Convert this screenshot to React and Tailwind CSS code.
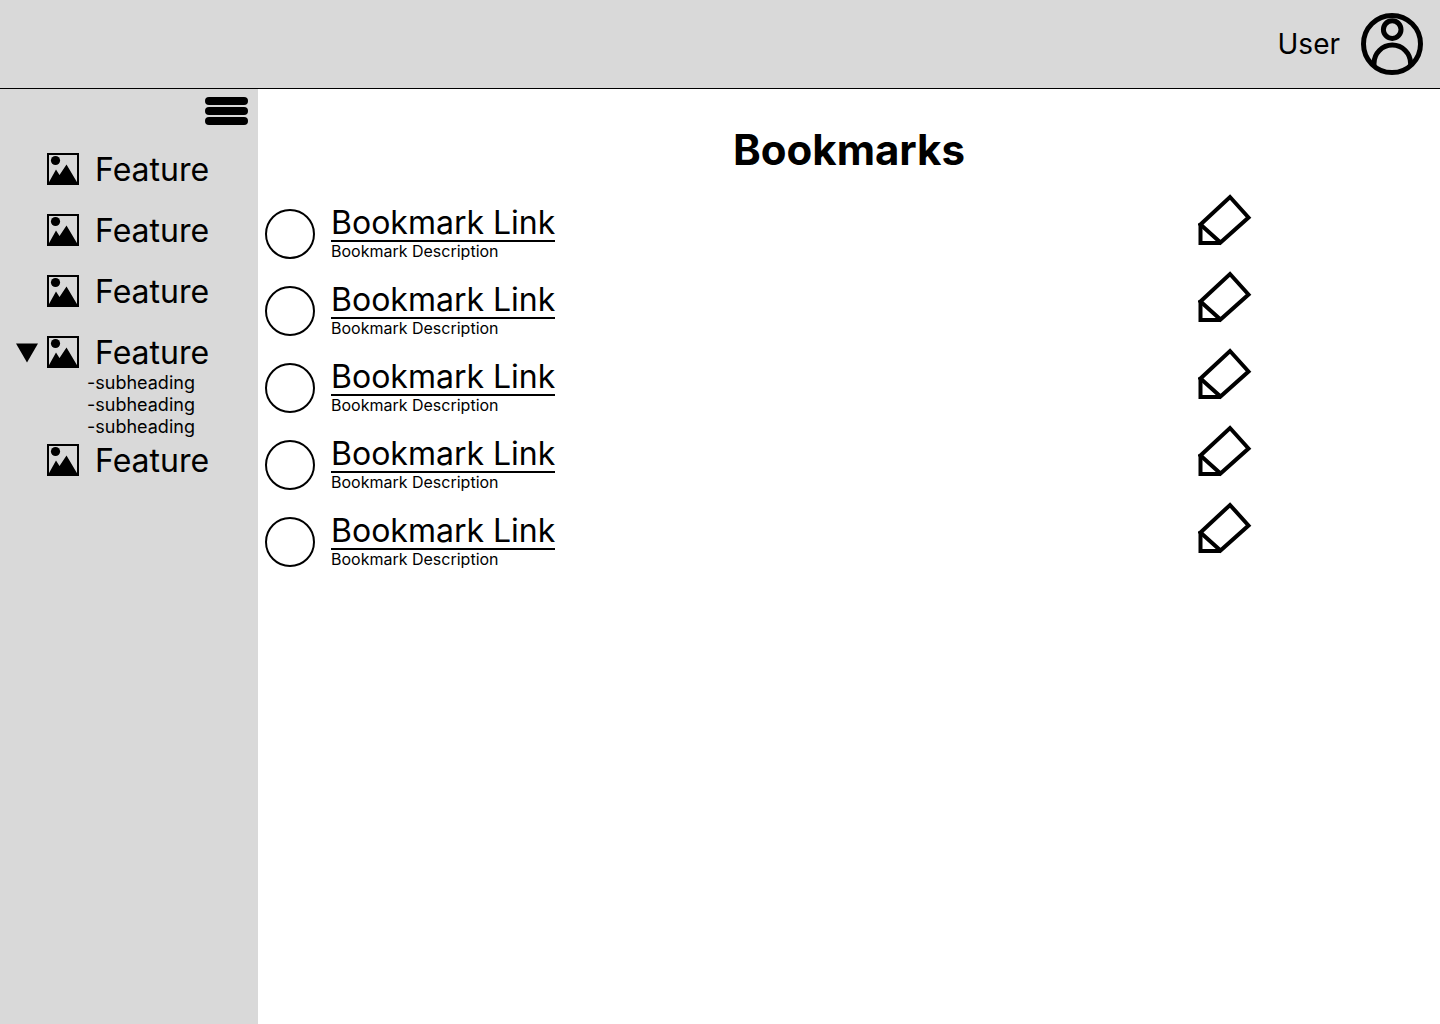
const bookmarks = [1, 2, 3, 4, 5];
const features = [
  { id: 1 },
  { id: 2 },
  { id: 3 },
  { id: 4, subheadings: ["-subheading", "-subheading", "-subheading"] },
  { id: 5 },
];

function UserIcon() {
  return (
    <svg className="size-[62px]" viewBox="0 0 62 62" fill="none" stroke="#000" strokeWidth="5" aria-hidden="true">
      <circle cx="31" cy="31" r="28.5" />
      <circle cx="31.2" cy="16.6" r="8.8" />
      <path d="M13 52V50.400a18.300 18.300 0 0 1 36.600 0V52" />
    </svg>
  );
}

function PictureIcon() {
  return (
    <svg className="size-8" viewBox="0 0 32 32" aria-hidden="true">
      <rect x="1" y="1" width="30" height="30" fill="none" stroke="#000" strokeWidth="2" />
      <circle cx="8.5" cy="7.5" r="4.6" />
      <path d="M1.500 30L9 16.500L12.500 22L19.500 11.500L30.500 30Z" />
    </svg>
  );
}

function PencilIcon() {
  return (
    <svg className="h-[52px] w-[54px]" viewBox="0 0 54 52" fill="none" stroke="#000" strokeWidth="4" aria-hidden="true">
      <path d="M2.500 30.500L32 3L50.500 23.500L22.500 48.500Z" />
      <path d="M2.500 29V49H23" />
    </svg>
  );
}

function Feature({ subheadings }) {
  return (
    <li>
      <div className="flex h-8 items-center">
        <div className="flex w-[47px] justify-end pr-[9px]">
          {subheadings && (
            <button type="button" aria-label="Collapse subheadings" aria-expanded="true">
              <svg className="size-[22px]" viewBox="0 0 22 22" aria-hidden="true">
                <path d="M0 2.500H22L11 21.500Z" />
              </svg>
            </button>
          )}
        </div>
        <a href="#feature" className="flex items-center gap-4 text-[32px] leading-8">
          <PictureIcon />
          <span className="pt-[2px]">Feature</span>
        </a>
      </div>
      {subheadings && (
        <ul className="-mb-[23px] pt-1 pl-[87px] text-[18px] leading-[22px]">
          {subheadings.map((text, i) => (
            <li key={i}>
              <a href="#subheading">{text}</a>
            </li>
          ))}
        </ul>
      )}
    </li>
  );
}

function Bookmark({ id }) {
  return (
    <li className="flex items-start">
      <input
        type="checkbox"
        id={`bookmark-${id}`}
        aria-label="Select bookmark"
        className="mt-[15px] size-[50px] shrink-0 appearance-none rounded-full border-2 border-black checked:bg-black"
      />
      <div className="mt-3 ml-4 flex grow flex-col items-start">
        <a href="#bookmark" className="border-b-2 border-black text-[32px] leading-[34px]">
          Bookmark Link
        </a>
        <p className="text-base leading-[18px]">Bookmark Description</p>
      </div>
      <button type="button" aria-label="Edit bookmark">
        <PencilIcon />
      </button>
    </li>
  );
}

export default function App() {
  return (
    <div className="flex min-h-screen flex-col bg-white font-[Inter,sans-serif] text-black">
      <header className="flex items-center justify-end gap-[21px] border-b border-black bg-[#d9d9d9] py-[13px] pr-[17px]">
        <span className="text-[28px] leading-[34px]">User</span>
        <button type="button" aria-label="User account">
          <UserIcon />
        </button>
      </header>
      <div className="flex grow">
        <nav className="w-[258px] shrink-0 bg-[#d9d9d9]" aria-label="Features">
          <div className="flex justify-end pt-2 pr-[10px]">
            <button type="button" aria-label="Toggle menu" className="flex flex-col gap-[2px]">
              <span className="h-2 w-[43px] rounded-full bg-black" />
              <span className="h-2 w-[43px] rounded-full bg-black" />
              <span className="h-2 w-[43px] rounded-full bg-black" />
            </button>
          </div>
          <ul className="mt-7 flex flex-col gap-[29px]">
            {features.map((feature) => (
              <Feature key={feature.id} subheadings={feature.subheadings} />
            ))}
          </ul>
        </nav>
        <main className="grow pt-[35px]">
          <h1 className="text-center text-[42px] leading-[51px] font-bold">Bookmarks</h1>
          <ul className="mt-[19px] flex flex-col gap-[11px] pr-[188px] pl-[7px]">
            {bookmarks.map((id) => (
              <Bookmark key={id} id={id} />
            ))}
          </ul>
        </main>
      </div>
    </div>
  );
}
